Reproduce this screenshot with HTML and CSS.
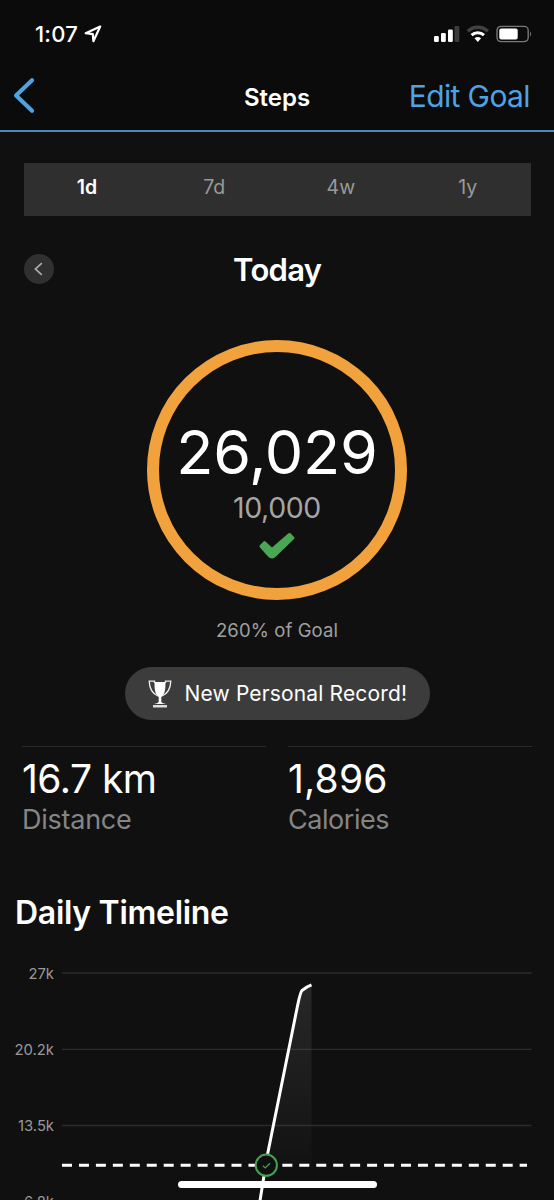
FILE: index.html
```html
<!DOCTYPE html>
<html lang="en">
<head>
<meta charset="utf-8">
<title>Steps</title>
<link rel="stylesheet" href="styles.css">
</head>
<body>
<div class="screen">
  <header class="header">
    <div class="status">
      <span class="time">1:07</span>
      <svg class="location" width="18" height="18" viewBox="0 0 18 18"><path d="M16.2 1.5 1.7 8.2 8.8 9.2 9.4 16.2Z" fill="none" stroke="#fff" stroke-width="2.2" stroke-linejoin="round"/></svg>
      <svg class="indicators" width="100" height="18" viewBox="0 0 100 18">
        <g fill="#fff"><rect x="1" y="11" width="4.8" height="6" rx="1.2"/><rect x="8" y="8" width="4.8" height="9" rx="1.2"/><rect x="15" y="4.5" width="4.8" height="12.5" rx="1.2"/><rect x="21.5" y="1" width="4.8" height="16" rx="1.2" fill="#3b3b3b"/></g>
        <g fill="none"><path d="M34.800 6.200A14.800 14.800 0 0 1 54.800 6.200" stroke="#424242" stroke-width="3.4"/><path d="M38.600 10.200A9 9 0 0 1 51 10.200" stroke="#fff" stroke-width="3"/></g>
        <path d="M41.500 13.200Q44.800 10.700 48.100 13.200L44.800 17Z" fill="#fff"/>
        <rect x="64" y="1.4" width="31.2" height="15.2" rx="4" fill="none" stroke="#777" stroke-width="1.4"/>
        <rect x="66.3" y="3.6" width="18.4" height="10.8" rx="2" fill="#fff"/>
        <path d="M97.200 6.200Q99.300 9 97.200 11.800Z" fill="#777"/>
      </svg>
    </div>
    <nav class="nav">
      <svg class="back" width="24" height="38" viewBox="0 0 24 38"><path d="M20 3.300 4.100 18.500 20 33.800" fill="none" stroke="#4fa3e3" stroke-width="4.2" stroke-linecap="round" stroke-linejoin="round"/></svg>
      <h1 class="title">Steps</h1>
      <span class="edit">Edit Goal</span>
    </nav>
  </header>

  <div class="tabs">
    <span class="tab active">1d</span><span class="tab">7d</span><span class="tab">4w</span><span class="tab">1y</span>
  </div>

  <div class="period">
    <span class="previous"><svg width="30" height="30" viewBox="0 0 30 30"><path d="M17.800 9.200 11.400 15 17.800 20.800" fill="none" stroke="#aaa" stroke-width="1.7"/></svg></span>
    <h2 class="day">Today</h2>
    <span></span>
  </div>

  <section class="ring">
    <span class="count">26,029</span>
    <span class="goal">10,000</span>
    <svg class="check" width="36" height="28" viewBox="0 0 36 28"><path d="M1 13 4.500 9.500Q5.500 8.700 6.500 9.500L13 15.500 29.500 1.300Q30.500.5 31.500 1.300L35 4.900Q36 5.900 35 6.900L17 24.500Q13 28.600 9 24.500L1 15.500Q0 14.300 1 13Z" fill="#49a653"/></svg>
  </section>
  <p class="percent">260% of Goal</p>

  <div class="record">
    <svg width="24" height="28" viewBox="0 0 24 28">
      <path d="M6.500 2H17.500C17.500 9 17.300 13.500 13.300 17V21.500Q13.300 23 18 24H6Q10.700 23 10.700 21.500V17C6.700 13.500 6.500 9 6.500 2Z" fill="#fff"/>
      <path d="M6.500 3V1.100H1.200C1.500 8 4 13.500 10 16M17.500 3V1.100H22.800C22.500 8 20 13.500 14 16" fill="none" stroke="#eee" stroke-width="1.3"/>
      <path d="M5 25H19V27.500H5Z" fill="#ddd"/>
    </svg>
    <span class="record-text">New Personal Record!</span>
  </div>

  <div class="stats">
    <div class="stat"><span class="value distance">16.7 km</span><span class="label">Distance</span></div>
    <div class="stat"><span class="value calories">1,896</span><span class="label label-calories">Calories</span></div>
  </div>

  <h2 class="timeline">Daily Timeline</h2>
  <div class="chart">
    <div class="axis"><span>27k</span><span>20.2k</span><span>13.5k</span><span>6.8k</span></div>
    <svg class="plot" width="492" height="265" viewBox="62 935 492 265">
      <defs><linearGradient id="area" x1="0" y1="985" x2="0" y2="1165" gradientUnits="userSpaceOnUse"><stop offset="0" stop-color="#fff" stop-opacity=".1"/><stop offset="1" stop-color="#fff" stop-opacity=".01"/></linearGradient></defs>
      <path d="M62 973H531.500M62 1049.300H531.500M62 1125.500H531.500" stroke="#2b2b2b" stroke-width="1.3"/>
      <path d="M266 1165 302 991 311.500 985V1165Z" fill="url(#area)"/>
      <path d="M62 1165.200H527" stroke="#fff" stroke-width="3" stroke-dasharray="10 6.95"/>
      <path d="M259.800 1202 267 1157 297.500 1006Q300.500 991.500 302.200 990.300 306 986.800 311.500 984.800" fill="none" stroke="#fff" stroke-width="3"/>
      <circle cx="266.3" cy="1165.200" r="10.6" fill="#101010" stroke="#45a052" stroke-width="2"/>
      <path d="M262.900 1165.700 265.300 1167.900 270 1163.200" fill="none" stroke="#45a052" stroke-width="1.3"/>
    </svg>
  </div>
  <div class="home"></div>
</div>
</body>
</html>
```
FILE: styles.css
```css
* { box-sizing: border-box; }
body { margin: 0; background: #101010; }
h1, h2, p { margin: 0; font-weight: 600; }
svg { display: block; flex: none; }
.screen { position: relative; width: 554px; height: 1200px; overflow: hidden; background: #101010; color: #fff; font-family: Inter, "Liberation Sans", sans-serif; white-space: nowrap; }
.header { height: 132px; padding-top: 16px; background: #0b0b0b; border-bottom: 2px solid #4f87b5; }
.status { display: flex; align-items: center; height: 36px; padding: 0 21px 0 35px; }
.time { width: 49px; font-size: 22px; font-weight: 500; letter-spacing: 0.2px; }
.indicators { margin-left: auto; }
.nav { display: grid; grid-template-columns: 1fr auto 1fr; align-items: center; height: 88px; padding: 10px 24px 0 12px; }
.back { margin-bottom: 10px; }
.title { font-size: 24px; line-height: 30px; margin: 0 0 6px 12px; }
.edit { justify-self: end; margin-bottom: 10px; font-size: 30px; line-height: 40px; color: #4fa3e3; font-weight: 400; letter-spacing: -0.6px; }
.tabs { display: grid; grid-template-columns: repeat(4, 1fr); width: 507px; height: 53px; margin: 31px 0 0 23.5px; background: #2f2f2f; }
.tab { padding-left: 1px; line-height: 48px; text-align: center; font-size: 19.5px; font-weight: 400; color: #999; }
.active { padding-left: 0; font-weight: 600; color: #fff; }
.period { display: grid; grid-template-columns: 1fr auto 1fr; align-items: center; height: 40px; margin: 33px 23px 0 23.5px; }
.previous { width: 30px; height: 30px; margin-bottom: 2px; border-radius: 50%; background: #303030; }
.day { font-size: 31px; line-height: 40px; letter-spacing: -0.7px; padding-top: 1px; }
.ring { display: flex; flex-direction: column; align-items: center; width: 260px; height: 260px; margin: 51px auto 0; padding-top: 65px; border: 12px solid #f2a23d; border-radius: 50%; }
.count { font-size: 61px; line-height: 71px; letter-spacing: -0.2px; }
.goal { font-size: 28.5px; line-height: 39px; font-weight: 400; letter-spacing: -0.4px; color: #a5a5a5; }
.check { margin-top: 5px; }
.percent { margin-top: 18px; text-align: center; font-size: 18.5px; line-height: 24px; font-weight: 400; letter-spacing: 0.1px; color: #a0a0a0; }
.record { display: flex; align-items: center; width: 305px; height: 53px; margin: 25px auto 0; padding-left: 23px; gap: 13px; border-radius: 27px; background: #3c3c3c; }
.record-text { font-size: 21px; letter-spacing: 0.15px; }
.stats { display: grid; grid-template-columns: 244px 244px; gap: 22px; margin: 25.5px 0 0 22px; }
.stat { display: flex; flex-direction: column; border-top: 1.5px solid #2b2b2b; }
.value { margin-top: 12px; font-size: 39px; line-height: 40px; }
.distance { letter-spacing: -0.5px; }
.calories { letter-spacing: 0.2px; }
.label { margin-top: 6.5px; font-size: 27px; line-height: 30px; font-weight: 400; letter-spacing: -0.25px; color: #858585; }
.label-calories { letter-spacing: -0.45px; }
.timeline { margin: 57px 0 0 15px; font-size: 32px; line-height: 42px; letter-spacing: -0.3px; }
.chart { display: flex; gap: 8px; margin-top: 1px; }
.axis { display: grid; grid-auto-rows: 76.1px; align-content: start; width: 54px; text-align: right; font-size: 14.8px; font-weight: 400; line-height: 78px; color: #999; }
.home { position: absolute; left: 178px; top: 1181px; width: 199px; height: 7px; border-radius: 4px; background: #fff; }
```
